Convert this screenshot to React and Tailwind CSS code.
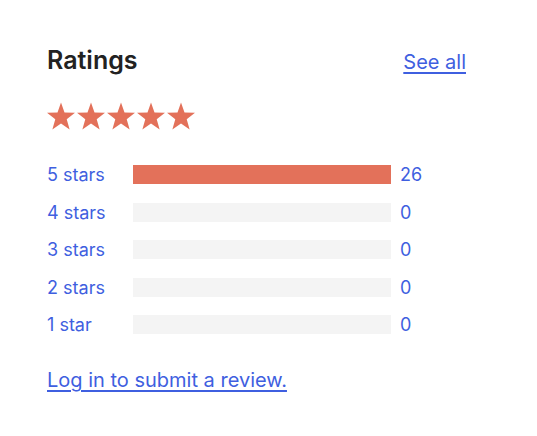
import React from "react";

const rows = [
  { label: "5 stars", count: 26 },
  { label: "4 stars", count: 0 },
  { label: "3 stars", count: 0 },
  { label: "2 stars", count: 0 },
  { label: "1 star", count: 0 },
];

const total = rows.reduce((sum, r) => sum + r.count, 0);

const Star = () => (
  <svg viewBox="0 0 24 23" className="w-[28px] h-[28px]" fill="#e3715a">
    <polygon points="12,0 15,8.4 24,8.7 16.9,14.2 19.4,23 12,17.9 4.6,23 7.1,14.2 0,8.7 9,8.4" />
  </svg>
);

const App = () => {
  return (
    <div
      className="min-h-screen bg-white pt-[45px] pl-[47px]"
      style={{ fontFamily: "Inter, 'Noto Sans', sans-serif" }}
    >
      <div className="w-[419px]">
        {/* Header */}
        <div className="flex justify-between items-baseline">
          <h2 className="text-[25px] leading-[30px] font-semibold text-[#222222]">Ratings</h2>
          <a href="#" className="text-[20px] leading-[24px] text-[#3f5fe0] underline underline-offset-[3px]">
            See all
          </a>
        </div>

        {/* Stars */}
        <div className="flex gap-[2px] mt-[27px]">
          {[0, 1, 2, 3, 4].map((i) => (
            <Star key={i} />
          ))}
        </div>

        {/* Breakdown */}
        <div className="flex flex-col gap-[18.5px] mt-[35px]">
          {rows.map((row) => (
            <div key={row.label} className="flex items-center h-[19px]">
              <a href="#" className="w-[86px] text-[18px] leading-[19px] text-[#3f5fe0]">
                {row.label}
              </a>
              <div className="w-[258px] h-[19px] bg-[#f4f4f4]">
                <div
                  className="h-full bg-[#e3715a]"
                  style={{ width: `${total ? (row.count / total) * 100 : 0}%` }}
                />
              </div>
              <span className="ml-[9px] text-[18px] leading-[19px] text-[#3f5fe0]">{row.count}</span>
            </div>
          ))}
        </div>

        {/* Login link */}
        <div className="mt-[34px]">
          <a href="#" className="text-[20px] leading-[24px] text-[#3f5fe0] underline underline-offset-[3px]">
            Log in to submit a review.
          </a>
        </div>
      </div>
    </div>
  );
};

export default App;
